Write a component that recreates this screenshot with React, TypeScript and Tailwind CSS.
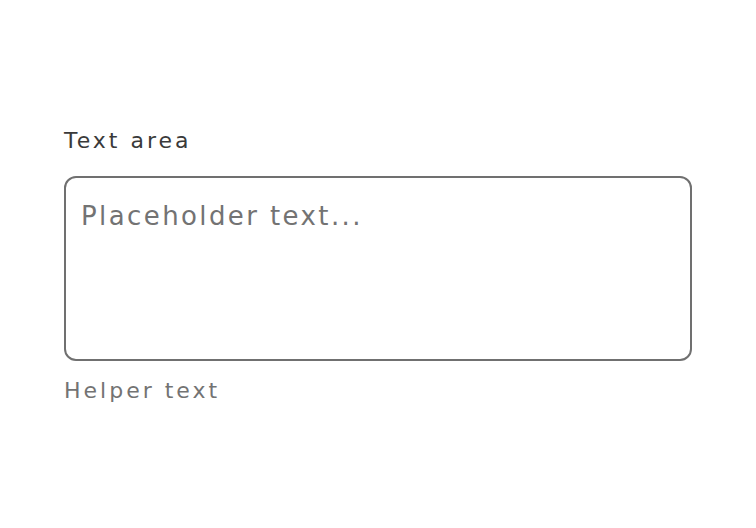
export default function App() {
  return (
    <div className="w-[756px] h-[528px] bg-white" style={{ fontFamily: '"DejaVu Sans", sans-serif' }}>
      <div className="pt-[124px] pl-[64px] w-[692px] flex flex-col">
        <label className="text-[22px] leading-[34px] tracking-[3px] text-[#3a3a3a]">Text area</label>
        <textarea
          className="mt-[18px] h-[185px] w-[628px] resize-none rounded-[12px] border-2 border-[#707070] px-[15px] py-[18px] text-[26px] leading-[40px] tracking-[2.4px] text-[#3d3d3d] placeholder:text-[#737373] outline-none"
          placeholder="Placeholder text..."
        />
        <span className="mt-[13px] text-[22px] leading-[34px] tracking-[3px] text-[#737373]">Helper text</span>
      </div>
    </div>
  );
}
